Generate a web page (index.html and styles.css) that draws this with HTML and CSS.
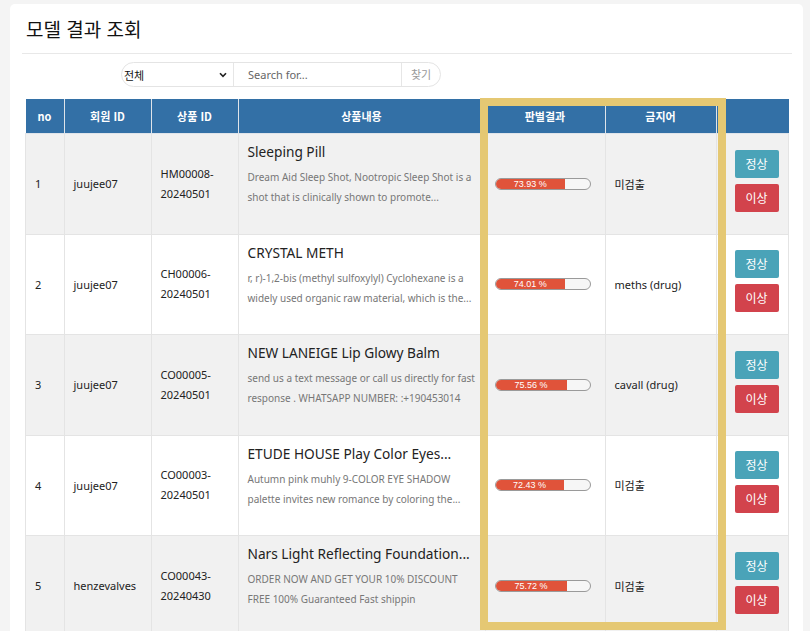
FILE: index.html
```html
<!DOCTYPE html>
<html lang="ko">
<head>
<meta charset="utf-8">
<title>모델 결과 조회</title>
<link rel="stylesheet" href="styles.css">
</head>
<body>
<div class="card">
  <h1 class="title">모델 결과 조회</h1>
  <div class="search">
    <div class="sel-wrap">
      <span class="sel-text">전체</span>
      <svg class="chev" width="8" height="6" viewBox="0 0 8 6"><path d="M1 1.2 L4 4.4 L7 1.2" fill="none" stroke="#222" stroke-width="1.6"/></svg>
    </div>
    <div class="search-input">Search for...</div>
    <div class="search-btn">찾기</div>
  </div>
  <div class="table-wrap">
    <table class="result">
      <thead>
        <tr>
          <th class="c-no">no</th>
          <th class="c-user">회원 ID</th>
          <th class="c-pid">상품 ID</th>
          <th class="c-content">상품내용</th>
          <th class="c-result">판별결과</th>
          <th class="c-word">금지어</th>
          <th class="c-act"></th>
        </tr>
      </thead>
      <tbody>
        <tr class="odd">
          <td>1</td>
          <td>juujee07</td>
          <td class="pid">HM00008-<br>20240501</td>
          <td class="content">
            <div class="p-title">Sleeping Pill</div>
            <div class="p-desc"><span>Dream Aid Sleep Shot, Nootropic Sleep Shot is a</span><span>shot that is clinically shown to promote...</span></div>
          </td>
          <td><div class="bar"><div class="fill" style="width:73.93%">73.93 %</div></div></td>
          <td>미검출</td>
          <td class="act"><div class="btn ok">정상</div><div class="btn bad">이상</div></td>
        </tr>
        <tr class="even">
          <td>2</td>
          <td>juujee07</td>
          <td class="pid">CH00006-<br>20240501</td>
          <td class="content">
            <div class="p-title">CRYSTAL METH</div>
            <div class="p-desc"><span>r, r)-1,2-bis (methyl sulfoxylyl) Cyclohexane is a</span><span>widely used organic raw material, which is the...</span></div>
          </td>
          <td><div class="bar"><div class="fill" style="width:74.01%">74.01 %</div></div></td>
          <td>meths (drug)</td>
          <td class="act"><div class="btn ok">정상</div><div class="btn bad">이상</div></td>
        </tr>
        <tr class="odd">
          <td>3</td>
          <td>juujee07</td>
          <td class="pid">CO00005-<br>20240501</td>
          <td class="content">
            <div class="p-title">NEW LANEIGE Lip Glowy Balm</div>
            <div class="p-desc"><span>send us a text message or call us directly for fast</span><span>response . WHATSAPP NUMBER: :+190453014</span></div>
          </td>
          <td><div class="bar"><div class="fill" style="width:75.56%">75.56 %</div></div></td>
          <td>cavall (drug)</td>
          <td class="act"><div class="btn ok">정상</div><div class="btn bad">이상</div></td>
        </tr>
        <tr class="even">
          <td>4</td>
          <td>juujee07</td>
          <td class="pid">CO00003-<br>20240501</td>
          <td class="content">
            <div class="p-title">ETUDE HOUSE Play Color Eyes...</div>
            <div class="p-desc"><span>Autumn pink muhly 9-COLOR EYE SHADOW</span><span>palette invites new romance by coloring the...</span></div>
          </td>
          <td><div class="bar"><div class="fill" style="width:72.43%">72.43 %</div></div></td>
          <td>미검출</td>
          <td class="act"><div class="btn ok">정상</div><div class="btn bad">이상</div></td>
        </tr>
        <tr class="odd">
          <td>5</td>
          <td>henzevalves</td>
          <td class="pid">CO00043-<br>20240430</td>
          <td class="content">
            <div class="p-title">Nars Light Reflecting Foundation...</div>
            <div class="p-desc"><span>ORDER NOW AND GET YOUR 10% DISCOUNT</span><span>FREE 100% Guaranteed Fast shippin</span></div>
          </td>
          <td><div class="bar"><div class="fill" style="width:75.72%">75.72 %</div></div></td>
          <td>미검출</td>
          <td class="act"><div class="btn ok">정상</div><div class="btn bad">이상</div></td>
        </tr>
      </tbody>
    </table>
    <div class="highlight"></div>
  </div>
</div>
</body>
</html>
```

FILE: styles.css
```css
html, body {
  margin: 0;
  padding: 0;
  background: #f4f4f4;
  height: 100%;
  overflow: hidden;
}
body {
  font-family: "Noto Sans", "Noto Sans CJK KR", sans-serif;
  color: #222;
  padding: 4px 7px 0 10px;
}
.card {
  background: #fff;
  border-radius: 5px;
  padding: 0 11px 0 12px;
  height: 700px;
}
.title {
  margin: 0;
  padding: 14px 0 0 4px;
  height: 35px;
  font-family: "Noto Sans CJK KR", sans-serif;
  font-weight: 400;
  font-size: 19px;
  line-height: 22px;
  color: #111;
  border-bottom: 1px solid #e8e8e8;
  box-sizing: content-box;
}
.search {
  display: flex;
  margin: 8px 0 0 99px;
  width: 320px;
  height: 25px;
  border: 1px solid #e4e4e4;
  border-radius: 13px;
  box-sizing: border-box;
  overflow: hidden;
  font-size: 11px;
}
.sel-wrap {
  width: 111px;
  display: flex;
  align-items: center;
  justify-content: space-between;
  padding: 0 6px 0 2px;
  box-sizing: border-box;
  font-family: "Noto Sans CJK KR", sans-serif;
  font-size: 11px;
  color: #111;
}
.search-input {
  flex: 1;
  border-left: 1px solid #e6e6e6;
  padding-left: 14px;
  line-height: 23px;
  color: #666;
}
.search-btn {
  width: 38px;
  border-left: 1px solid #e6e6e6;
  text-align: center;
  line-height: 23px;
  color: #999;
  font-family: "Noto Sans CJK KR", sans-serif;
}
.table-wrap {
  position: relative;
  margin: 12px 1px 0 3px;
}
.result {
  width: 764px;
  border-collapse: collapse;
  table-layout: fixed;
  font-size: 11px;
}
.result th {
  background: #3370a6;
  color: #fff;
  font-family: "Noto Sans CJK KR", sans-serif;
  font-weight: 700;
  font-size: 11px;
  height: 34px;
  padding: 0;
  border: 1px solid #dfe4ea;
  border-top: 0;
  text-align: center;
}
.result th:first-child { border-left: 0; }
.result th:last-child { border-right: 0; }
.c-no { width: 38px; }
.c-user { width: 86px; }
.c-pid { width: 86px; }
.c-content { width: 246px; }
.c-result { width: 119px; }
.c-word { width: 110px; }
.result td {
  height: 100.5px;
  padding: 0 8px 0 9px;
  border: 1px solid #e4e4e4;
  vertical-align: middle;
  color: #222;
  box-sizing: border-box;
}
.result tr.odd td { background: #f1f1f1; }
.result tr.even td { background: #fff; }
.pid { line-height: 20px; }
.result td.content {
  vertical-align: top;
  padding-top: 8px;
}
.p-title {
  font-size: 13.7px;
  line-height: 20px;
  color: #222;
  white-space: nowrap;
}
.p-desc {
  margin-top: 5px;
  font-size: 10px;
  line-height: 20px;
  color: #777;
}
.p-desc span { display: block; white-space: nowrap; }
.bar {
  width: 96px;
  height: 12px;
  border: 1px solid #9a9a9a;
  border-radius: 6px;
  background: #f6f6f6;
  box-sizing: border-box;
  overflow: hidden;
}
.fill {
  height: 100%;
  background: #e0533a;
  color: #fff;
  font-family: "Liberation Sans", sans-serif;
  font-size: 9px;
  line-height: 10px;
  text-align: center;
}
.result td.act { padding: 0 0 6px 18px; }
.btn {
  width: 44px;
  height: 28px;
  border-radius: 2px;
  color: #fff;
  font-family: "Noto Sans CJK KR", sans-serif;
  font-size: 12px;
  line-height: 28px;
  text-align: center;
}
.btn + .btn { margin-top: 6px; }
.ok { background: #4aa3b8; }
.bad { background: #d2434c; }
.highlight {
  position: absolute;
  left: 455px;
  top: -1px;
  width: 246px;
  height: 532px;
  border: 8px solid #e5c873;
  box-sizing: border-box;
  pointer-events: none;
}
```
